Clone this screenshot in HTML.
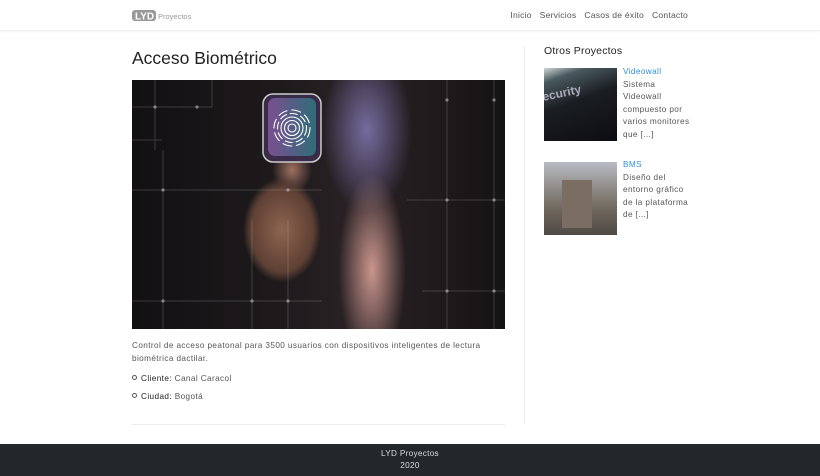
<!DOCTYPE html>
<html><head><meta charset="utf-8"><style>
*{margin:0;padding:0;box-sizing:border-box}
body{width:820px;height:476px;background:#fff;font-family:"Liberation Sans",sans-serif;color:#666;position:relative;overflow:hidden}
.hdr{position:absolute;left:0;top:0;width:820px;height:31px;border-bottom:1px solid #eee;box-shadow:0 1px 2px rgba(0,0,0,.04)}
.logo{position:absolute;left:132px;top:9px;}
.nav{position:absolute;right:132px;top:10px;font-size:8.6px;color:#555;letter-spacing:.2px}
.nav span{margin-left:8px}
h1{position:absolute;left:132px;top:48px;font-size:17.5px;font-weight:normal;color:#222}
.img{position:absolute;left:132px;top:80px;width:373px;height:249px;overflow:hidden;background:
radial-gradient(ellipse 45px 130px at 240px 190px,rgba(230,170,160,.85),transparent 75%),
radial-gradient(ellipse 60px 110px at 235px 50px,rgba(150,140,210,.7),transparent 75%),
radial-gradient(ellipse 52px 70px at 150px 150px,#8e6450,#5e4034 60%,transparent 75%),
radial-gradient(ellipse 25px 30px at 160px 90px,#a07060,transparent 80%),
linear-gradient(90deg,#121013,#1e1a1c 40%,#2a2226 60%,#161314);}
.txt{position:absolute;left:132px;top:339px;width:373px;font-size:8.2px;line-height:13px;color:#555;letter-spacing:.4px}
ul{position:absolute;left:132px;top:374px;font-size:8.2px;color:#555;list-style:none;letter-spacing:.4px}
li{margin-bottom:4.5px;height:13px}
li:before{content:"";display:inline-block;width:3px;height:3px;border:1px solid #555;border-radius:50%;margin:0 4px 1px 0}
li b{font-weight:normal;color:#222}
.hr{position:absolute;left:132px;top:424px;width:373px;border-top:1px solid #eee}
.vr{position:absolute;left:524px;top:46px;height:378px;border-left:1px solid #eee}
.side h3{position:absolute;left:544px;top:45px;font-size:10.5px;font-weight:normal;color:#222;letter-spacing:.2px}
.th{position:absolute;left:544px;width:73px;height:73px;overflow:hidden}
.st{position:absolute;left:623px;font-size:8.2px;line-height:12.5px;color:#555;width:68px;letter-spacing:.4px}
.st a{color:#2e8ee2;text-decoration:none}
.ft{position:absolute;left:0;top:444px;width:820px;height:32px;background:#23262b;color:#ddd;font-size:8.2px;text-align:center;line-height:12px;padding-top:4px;letter-spacing:.3px}
</style></head><body>
<div class="hdr">
<div class="logo"><svg width="60" height="14"><rect x="0" y="1" width="24" height="11" rx="3" fill="#999"/><text x="3" y="10.5" font-size="10" font-weight="bold" fill="#fff" font-family="Liberation Sans">LYD</text><text x="26" y="10" font-size="7.5" fill="#999" font-family="Liberation Sans">Proyectos</text></svg></div>
<div class="nav"><span>Inicio</span><span>Servicios</span><span>Casos de éxito</span><span>Contacto</span></div>
</div>
<h1>Acceso Biométrico</h1>
<div class="img">
<svg width="373" height="249" style="position:absolute;left:0;top:0">
<g stroke="rgba(200,200,200,.22)" fill="none" stroke-width="1">
<path d="M0 27H80V0M23 0V70M0 110H190M31 70V249M0 221H190M156 140V249M315 0V120M275 120H373M315 120V249M290 211H373M120 140V249M362 0V249M0 60H30"/>
</g>
<g fill="rgba(220,220,220,.5)"><circle cx="23" cy="27" r="1.6"/><circle cx="65" cy="27" r="1.6"/><circle cx="31" cy="110" r="1.6"/><circle cx="156" cy="110" r="1.6"/><circle cx="315" cy="120" r="1.6"/><circle cx="362" cy="120" r="1.6"/><circle cx="31" cy="221" r="1.6"/><circle cx="120" cy="221" r="1.6"/><circle cx="156" cy="221" r="1.6"/><circle cx="315" cy="211" r="1.6"/><circle cx="362" cy="211" r="1.6"/><circle cx="315" cy="20" r="1.6"/><circle cx="362" cy="20" r="1.6"/></g>
<defs><linearGradient id="g" x1="0" x2="1"><stop offset="0" stop-color="#7a4f90"/><stop offset="1" stop-color="#2f6d78"/></linearGradient></defs>
<rect x="131" y="14" width="58" height="68" rx="10" fill="#3a2c48" stroke="#ccc" stroke-width="1.5"/>
<rect x="136" y="18" width="48" height="58" rx="7" fill="url(#g)"/>
<g stroke="#fff" fill="none" stroke-width="1.1">
<circle cx="160" cy="48" r="4"/><circle cx="160" cy="48" r="7.5"/><circle cx="160" cy="48" r="11"/><circle cx="160" cy="48" r="14.5" stroke-dasharray="8 3"/><circle cx="160" cy="48" r="18" stroke-dasharray="10 4"/></g>
</svg></div>
<div class="txt">Control de acceso peatonal para 3500 usuarios con dispositivos inteligentes de lectura biométrica dactilar.</div>
<ul><li><b>Cliente:</b> Canal Caracol</li><li><b>Ciudad:</b> Bogotá</li></ul>
<div class="hr"></div>
<div class="vr"></div>
<div class="side"><h3>Otros Proyectos</h3>
<div class="th" style="top:68px;background:linear-gradient(160deg,#cfd8d8 0%,#4a5a60 15%,#1a1d22 45%,#0c0d10 100%)"><span style="position:absolute;left:-2px;top:18px;color:#aab;font-size:12px;font-weight:bold;transform:rotate(-12deg)">ecurity</span></div>
<div class="st" style="top:66px"><a>Videowall</a><br>Sistema Videowall compuesto por varios monitores que [...]</div>
<div class="th" style="top:162px;background:linear-gradient(180deg,#b8bcc4 0%,#8a8680 40%,#6a6258 70%,#504a46 100%)"><div style="position:absolute;left:18px;top:18px;width:30px;height:48px;background:#7a6e62"></div></div>
<div class="st" style="top:159px"><a>BMS</a><br>Diseño del entorno gráfico de la plataforma de [...]</div>
</div>
<div class="ft">LYD Proyectos<br>2020</div>
</body></html>
